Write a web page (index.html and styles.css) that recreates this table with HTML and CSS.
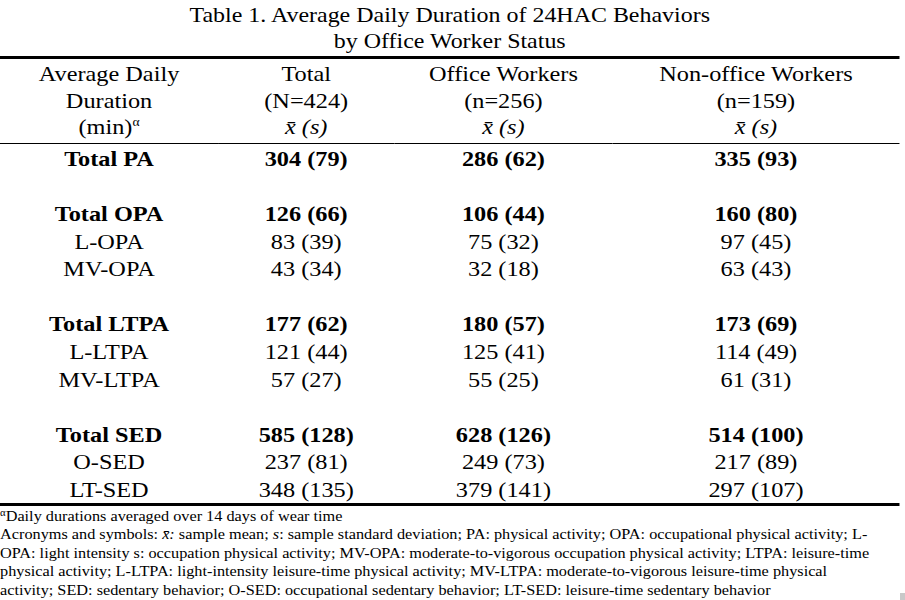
FILE: index.html
```html
<!DOCTYPE html>
<html lang="en">
<head>
<meta charset="utf-8">
<title>Table 1</title>
<link rel="stylesheet" href="styles.css">
</head>
<body>
<div class="page">
  <h1 class="title">Table 1. Average Daily Duration of 24HAC Behaviors<br>by Office Worker Status</h1>
  <table class="data">
    <colgroup>
      <col class="c1"><col class="c2"><col class="c3"><col class="c4">
    </colgroup>
    <thead>
      <tr>
        <th>Average Daily<br>Duration<br>(min)<sup class="sup">α</sup></th>
        <th>Total<br>(N=424)<br><i>x̄ (s)</i></th>
        <th>Office Workers<br>(n=256)<br><i>x̄ (s)</i></th>
        <th>Non-office Workers<br>(n=159)<br><i>x̄ (s)</i></th>
      </tr>
    </thead>
    <tbody>
      <tr class="bold"><td>Total PA</td><td>304 (79)</td><td>286 (62)</td><td>335 (93)</td></tr>
      <tr class="gap"><td colspan="4">&nbsp;</td></tr>
      <tr class="bold"><td>Total OPA</td><td>126 (66)</td><td>106 (44)</td><td>160 (80)</td></tr>
      <tr><td>L-OPA</td><td>83 (39)</td><td>75 (32)</td><td>97 (45)</td></tr>
      <tr><td>MV-OPA</td><td>43 (34)</td><td>32 (18)</td><td>63 (43)</td></tr>
      <tr class="gap"><td colspan="4">&nbsp;</td></tr>
      <tr class="bold"><td>Total LTPA</td><td>177 (62)</td><td>180 (57)</td><td>173 (69)</td></tr>
      <tr><td>L-LTPA</td><td>121 (44)</td><td>125 (41)</td><td>114 (49)</td></tr>
      <tr><td>MV-LTPA</td><td>57 (27)</td><td>55 (25)</td><td>61 (31)</td></tr>
      <tr class="gap"><td colspan="4">&nbsp;</td></tr>
      <tr class="bold"><td>Total SED</td><td>585 (128)</td><td>628 (126)</td><td>514 (100)</td></tr>
      <tr><td>O-SED</td><td>237 (81)</td><td>249 (73)</td><td>217 (89)</td></tr>
      <tr><td>LT-SED</td><td>348 (135)</td><td>379 (141)</td><td>297 (107)</td></tr>
    </tbody>
  </table>
  <div class="notes">
    <p class="note"><sup class="nsup">α</sup>Daily durations averaged over 14 days of wear time</p>
    <p class="note">Acronyms and symbols: <i>x̄:</i> sample mean; <i>s</i>: sample standard deviation; PA: physical activity; OPA: occupational physical activity; L-<br>OPA: light intensity s: occupation physical activity; MV-OPA: moderate-to-vigorous occupation physical activity; LTPA: leisure-time<br>physical activity; L-LTPA: light-intensity leisure-time physical activity; MV-LTPA: moderate-to-vigorous leisure-time physical<br>activity; SED: sedentary behavior; O-SED: occupational sedentary behavior; LT-SED: leisure-time sedentary behavior</p>
  </div>
</div>
<div class="corner"></div>
</body>
</html>
```

FILE: styles.css
```css
html, body {
  margin: 0;
  padding: 0;
  background: #ffffff;
}

body {
  position: relative;
  color: #000000;
  font-family: "Liberation Serif", "Times New Roman", serif;
  width: 905px;
  height: 600px;
  overflow: hidden;
}

.page {
  width: 796px;
  transform: scaleX(1.13);
  transform-origin: 0 0;
}

.title {
  margin: 0;
  padding-top: 2px;
  font-size: 21.2px;
  font-weight: normal;
  line-height: 26.4px;
  text-align: center;
}

.data {
  width: 796px;
  margin-top: 1px;
  border-collapse: separate;
  border-spacing: 0;
  border-top: 3px solid #000;
  border-bottom: 3px solid #000;
  font-size: 21.5px;
  table-layout: fixed;
}

.c1 { width: 193px; }
.c2 { width: 156px; }
.c3 { width: 193px; }
.c4 { width: 254px; }

.data th {
  font-weight: normal;
  line-height: 26.3px;
  padding: 2.5px 0 2.7px;
  border-bottom: 1px solid #000;
  text-align: center;
  vertical-align: top;
}

.data td {
  line-height: 24.6px;
  padding: 3px 0 0;
  text-align: center;
  white-space: nowrap;
}

.bold td {
  font-weight: bold;
}

.sup {
  font-size: 12px;
  line-height: 0;
  vertical-align: 8px;
}

.notes {
  margin-top: 1px;
  font-size: 14.4px;
  line-height: 18.5px;
}

.note {
  margin: 0;
  white-space: nowrap;
}

.nsup {
  font-size: 9.5px;
  line-height: 0;
  vertical-align: 5px;
}

.corner {
  position: absolute;
  right: 0;
  bottom: 0;
  width: 5px;
  height: 7px;
  background: #c8c8c8;
}
```
